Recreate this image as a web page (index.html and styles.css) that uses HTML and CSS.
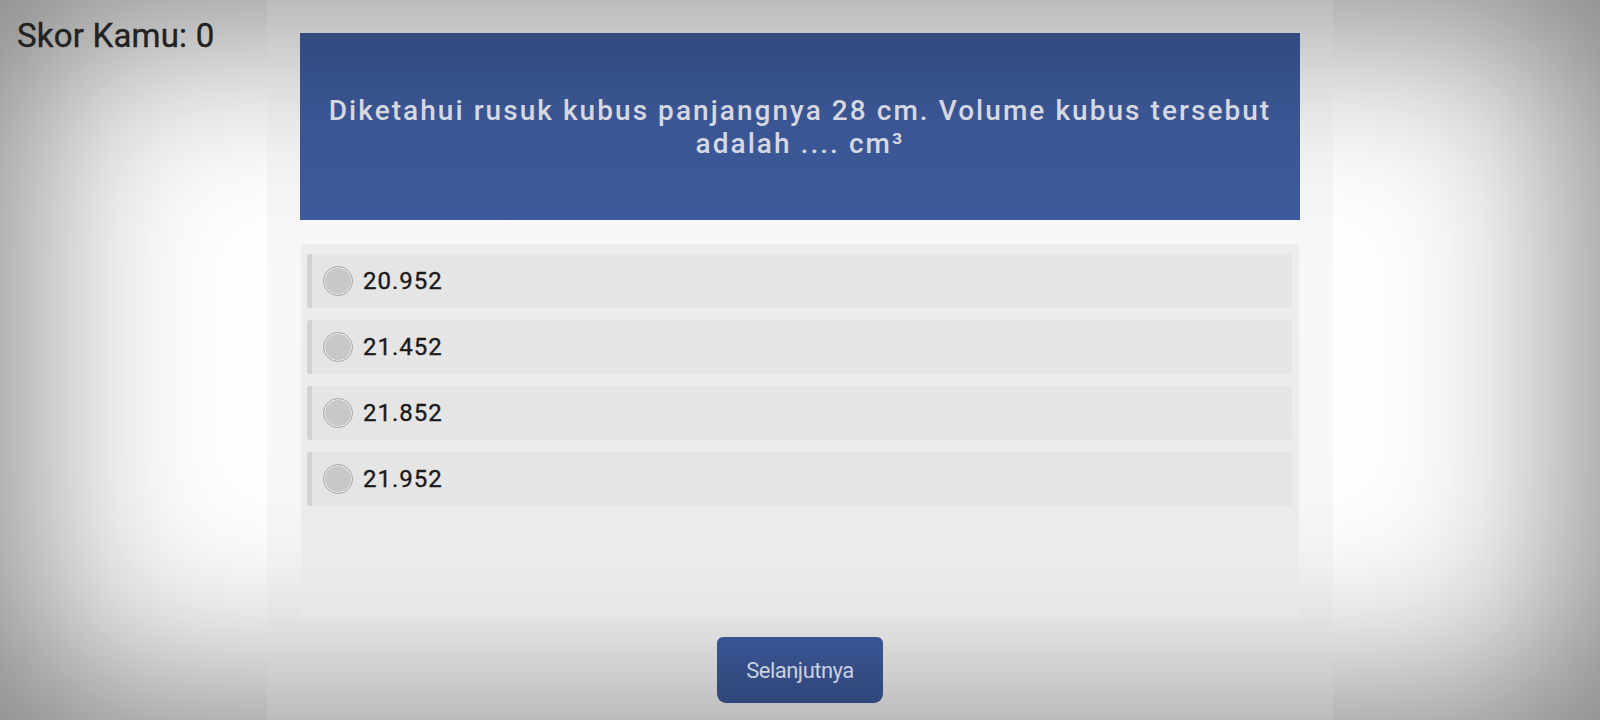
FILE: index.html
```html
<!DOCTYPE html>
<html lang="id">
<head>
<meta charset="utf-8">
<title>Kuis</title>
<link rel="stylesheet" href="styles.css">
</head>
<body>
<div class="page">
  <div class="side">
    <div class="score">Skor Kamu: 0</div>
  </div>
  <main class="column">
    <div class="question">Diketahui rusuk kubus panjangnya 28 cm. Volume kubus tersebut adalah .... cm³</div>
    <div class="options">
      <label class="option"><span class="radio"></span><span class="val">20.952</span></label>
      <label class="option"><span class="radio"></span><span class="val">21.452</span></label>
      <label class="option"><span class="radio"></span><span class="val">21.852</span></label>
      <label class="option"><span class="radio"></span><span class="val">21.952</span></label>
    </div>
    <div class="actions">
      <button class="next">Selanjutnya</button>
    </div>
  </main>
  <div class="side"></div>
</div>
</body>
</html>
```
FILE: styles.css
```css
html, body {
  margin: 0;
  padding: 0;
  height: 720px;
  overflow: hidden;
}
body {
  background: #ffffff;
  font-family: Roboto, "Liberation Sans", sans-serif;
}
.page {
  height: 720px;
  display: grid;
  grid-template-columns: 1fr 1066px 1fr;
  box-shadow: inset 0 0 200px 20px rgba(0, 0, 0, 0.52);
}
.score {
  padding: 17px 0 0 17px;
  font-size: 33px;
  font-weight: 400;
  letter-spacing: 0.2px;
  -webkit-text-stroke: 0.4px #222;
  color: #222;
  line-height: 38px;
}
.column {
  background: rgba(220, 220, 220, 0.2);
  padding: 33px 33px 0;
  display: flex;
  flex-direction: column;
}
.question {
  height: 187px;
  box-sizing: border-box;
  padding: 0 20px;
  display: flex;
  align-items: center;
  justify-content: center;
  text-align: center;
  background: linear-gradient(to bottom, #314a7e 0%, #3a5592 45%, #3d5a9a 100%);
  color: #d5d8e0;
  font-size: 28px;
  font-weight: 500;
  letter-spacing: 2.05px;
  line-height: 33px;
}
.options {
  margin: 24px 1px 0;
  height: 375px;
  box-sizing: border-box;
  padding: 10px 7px 0 6px;
  background: linear-gradient(to bottom, #ededed 0%, #ebebeb 85%, #e6e6e6 100%);
  display: flex;
  flex-direction: column;
  gap: 12px;
}
.option {
  height: 54px;
  display: flex;
  align-items: center;
  background: #e5e5e5;
  border-left: 5px solid #d2d2d2;
  border-radius: 3px 0 0 3px;
}
.radio {
  width: 28px;
  height: 28px;
  margin-left: 11px;
  border-radius: 50%;
  background: #c8c8c8;
  border: 1px solid #a9a9a9;
  box-shadow: inset 0 0 0 1px #ececec;
}
.val {
  margin-left: 10px;
  font-size: 24px;
  font-weight: 400;
  letter-spacing: 1px;
  -webkit-text-stroke: 0.35px #1a1a1a;
  color: #1a1a1a;
}
.actions {
  display: flex;
  justify-content: center;
  padding-top: 18px;
}
.next {
  width: 166px;
  height: 66px;
  border: none;
  border-radius: 6px 6px 9px 9px;
  background: linear-gradient(to bottom, #3a5594 0%, #2f4678 100%);
  color: #c9d0e2;
  font-family: Roboto, "Liberation Sans", sans-serif;
  font-size: 22px;
  font-weight: 400;
  letter-spacing: -0.5px;
  padding: 0;
}
```
